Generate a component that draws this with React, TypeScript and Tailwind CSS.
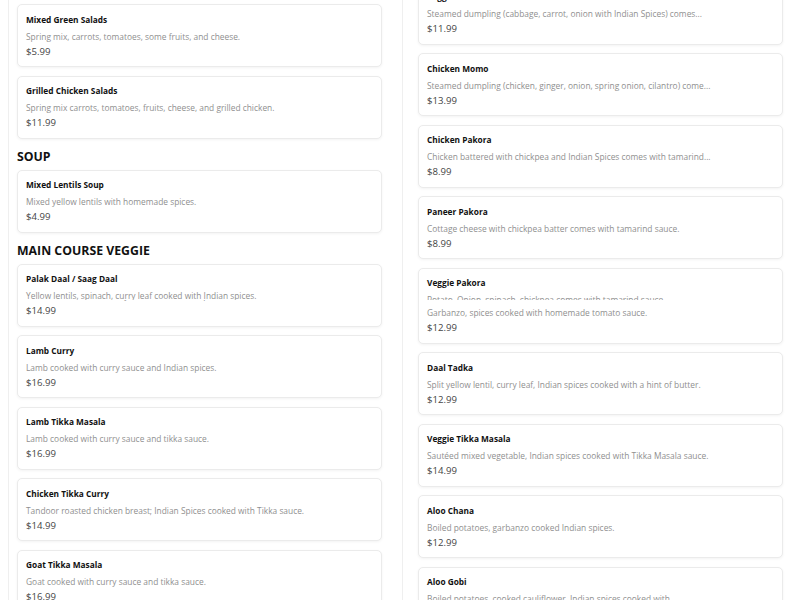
import React from "react";

type Item = { name: string; desc: string; price: string };
type Block = { heading?: string; item?: Item };

const font = { fontFamily: '"Open Sans", "Noto Sans", sans-serif' };

function Card({ item }: { item: Item }) {
  return (
    <div className="h-[63px] mb-[8.5px] rounded-[5px] border border-[#ebebeb] bg-white shadow-[0_1px_3px_rgba(0,0,0,0.05)] px-[8px] pt-[6.5px] box-border">
      <div className="text-[8.3px] leading-[16px] font-bold text-[#111] whitespace-nowrap">{item.name}</div>
      <div className="text-[8.4px] leading-[17px] text-[#8f8f8f] whitespace-nowrap">{item.desc}</div>
      <div className="text-[9.6px] leading-[13px] text-[#444] whitespace-nowrap">{item.price}</div>
    </div>
  );
}

function Heading({ text }: { text: string }) {
  return (
    <div className="mt-[10px] mb-[5px] h-[16px] text-[12.3px] leading-[16px] font-bold text-[#111] whitespace-nowrap">
      {text}
    </div>
  );
}

function Column({ blocks, offset, left }: { blocks: Block[]; offset: string; left: boolean }) {
  return (
    <div
      className={
        left
          ? "ml-[8px] w-[394px] border-l border-[#efefef] pl-[8px] box-border"
          : "w-[398px] border-l border-[#efefef] pl-[15px] box-border"
      }
    >
      <div className="w-[365px]" style={{ marginTop: offset }}>
        {blocks.map((b, i) =>
          b.heading ? <Heading key={i} text={b.heading} /> : <Card key={i} item={b.item!} />
        )}
      </div>
    </div>
  );
}

const topLeft: Block[] = [
  { item: { name: "Mixed Green Salads", desc: "Spring mix, carrots, tomatoes, some fruits, and cheese.", price: "$5.99" } },
  { item: { name: "Grilled Chicken Salads", desc: "Spring mix carrots, tomatoes, fruits, cheese, and grilled chicken.", price: "$11.99" } },
  { heading: "SOUP" },
  { item: { name: "Mixed Lentils Soup", desc: "Mixed yellow lentils with homemade spices.", price: "$4.99" } },
  { heading: "MAIN COURSE VEGGIE" },
  { item: { name: "Palak Daal / Saag Daal", desc: "Yellow lentils, spinach, curry leaf cooked with Indian spices.", price: "$14.99" } },
];

const topRight: Block[] = [
  { item: { name: "Veggie Momo", desc: "Steamed dumpling (cabbage, carrot, onion with Indian Spices) comes...", price: "$11.99" } },
  { item: { name: "Chicken Momo", desc: "Steamed dumpling (chicken, ginger, onion, spring onion, cilantro) come...", price: "$13.99" } },
  { item: { name: "Chicken Pakora", desc: "Chicken battered with chickpea and Indian Spices comes with tamarind...", price: "$8.99" } },
  { item: { name: "Paneer Pakora", desc: "Cottage cheese with chickpea batter comes with tamarind sauce.", price: "$8.99" } },
  { item: { name: "Veggie Pakora", desc: "Potato, Onion, spinach, chickpea comes with tamarind sauce.", price: "$8.99" } },
];

const bottomLeft: Block[] = [
  { item: { name: "Chicken Curry", desc: "Chicken cooked with curry sauce and Indian spices.", price: "$14.99" } },
  { item: { name: "Lamb Curry", desc: "Lamb cooked with curry sauce and Indian spices.", price: "$16.99" } },
  { item: { name: "Lamb Tikka Masala", desc: "Lamb cooked with curry sauce and tikka sauce.", price: "$16.99" } },
  { item: { name: "Chicken Tikka Curry", desc: "Tandoor roasted chicken breast; Indian Spices cooked with Tikka sauce.", price: "$14.99" } },
  { item: { name: "Goat Tikka Masala", desc: "Goat cooked with curry sauce and tikka sauce.", price: "$16.99" } },
];

const bottomRight: Block[] = [
  { item: { name: "Chana Masala", desc: "Garbanzo, spices cooked with homemade tomato sauce.", price: "$12.99" } },
  { item: { name: "Daal Tadka", desc: "Split yellow lentil, curry leaf, Indian spices cooked with a hint of butter.", price: "$12.99" } },
  { item: { name: "Veggie Tikka Masala", desc: "Sautéed mixed vegetable, Indian spices cooked with Tikka Masala sauce.", price: "$14.99" } },
  { item: { name: "Aloo Chana", desc: "Boiled potatoes, garbanzo cooked Indian spices.", price: "$12.99" } },
  { item: { name: "Aloo Gobi", desc: "Boiled potatoes, cooked cauliflower, Indian spices cooked with...", price: "$12.99" } },
];

export default function App() {
  return (
    <div className="w-[800px] h-[600px] bg-white overflow-hidden" style={font}>
      <div className="h-[300px] overflow-hidden flex">
        <Column blocks={topLeft} offset="4px" left />
        <Column blocks={topRight} offset="-18.5px" left={false} />
      </div>
      <div className="h-[300px] overflow-hidden flex">
        <Column blocks={bottomLeft} offset="-36.5px" left />
        <Column blocks={bottomRight} offset="-19.5px" left={false} />
      </div>
    </div>
  );
}
